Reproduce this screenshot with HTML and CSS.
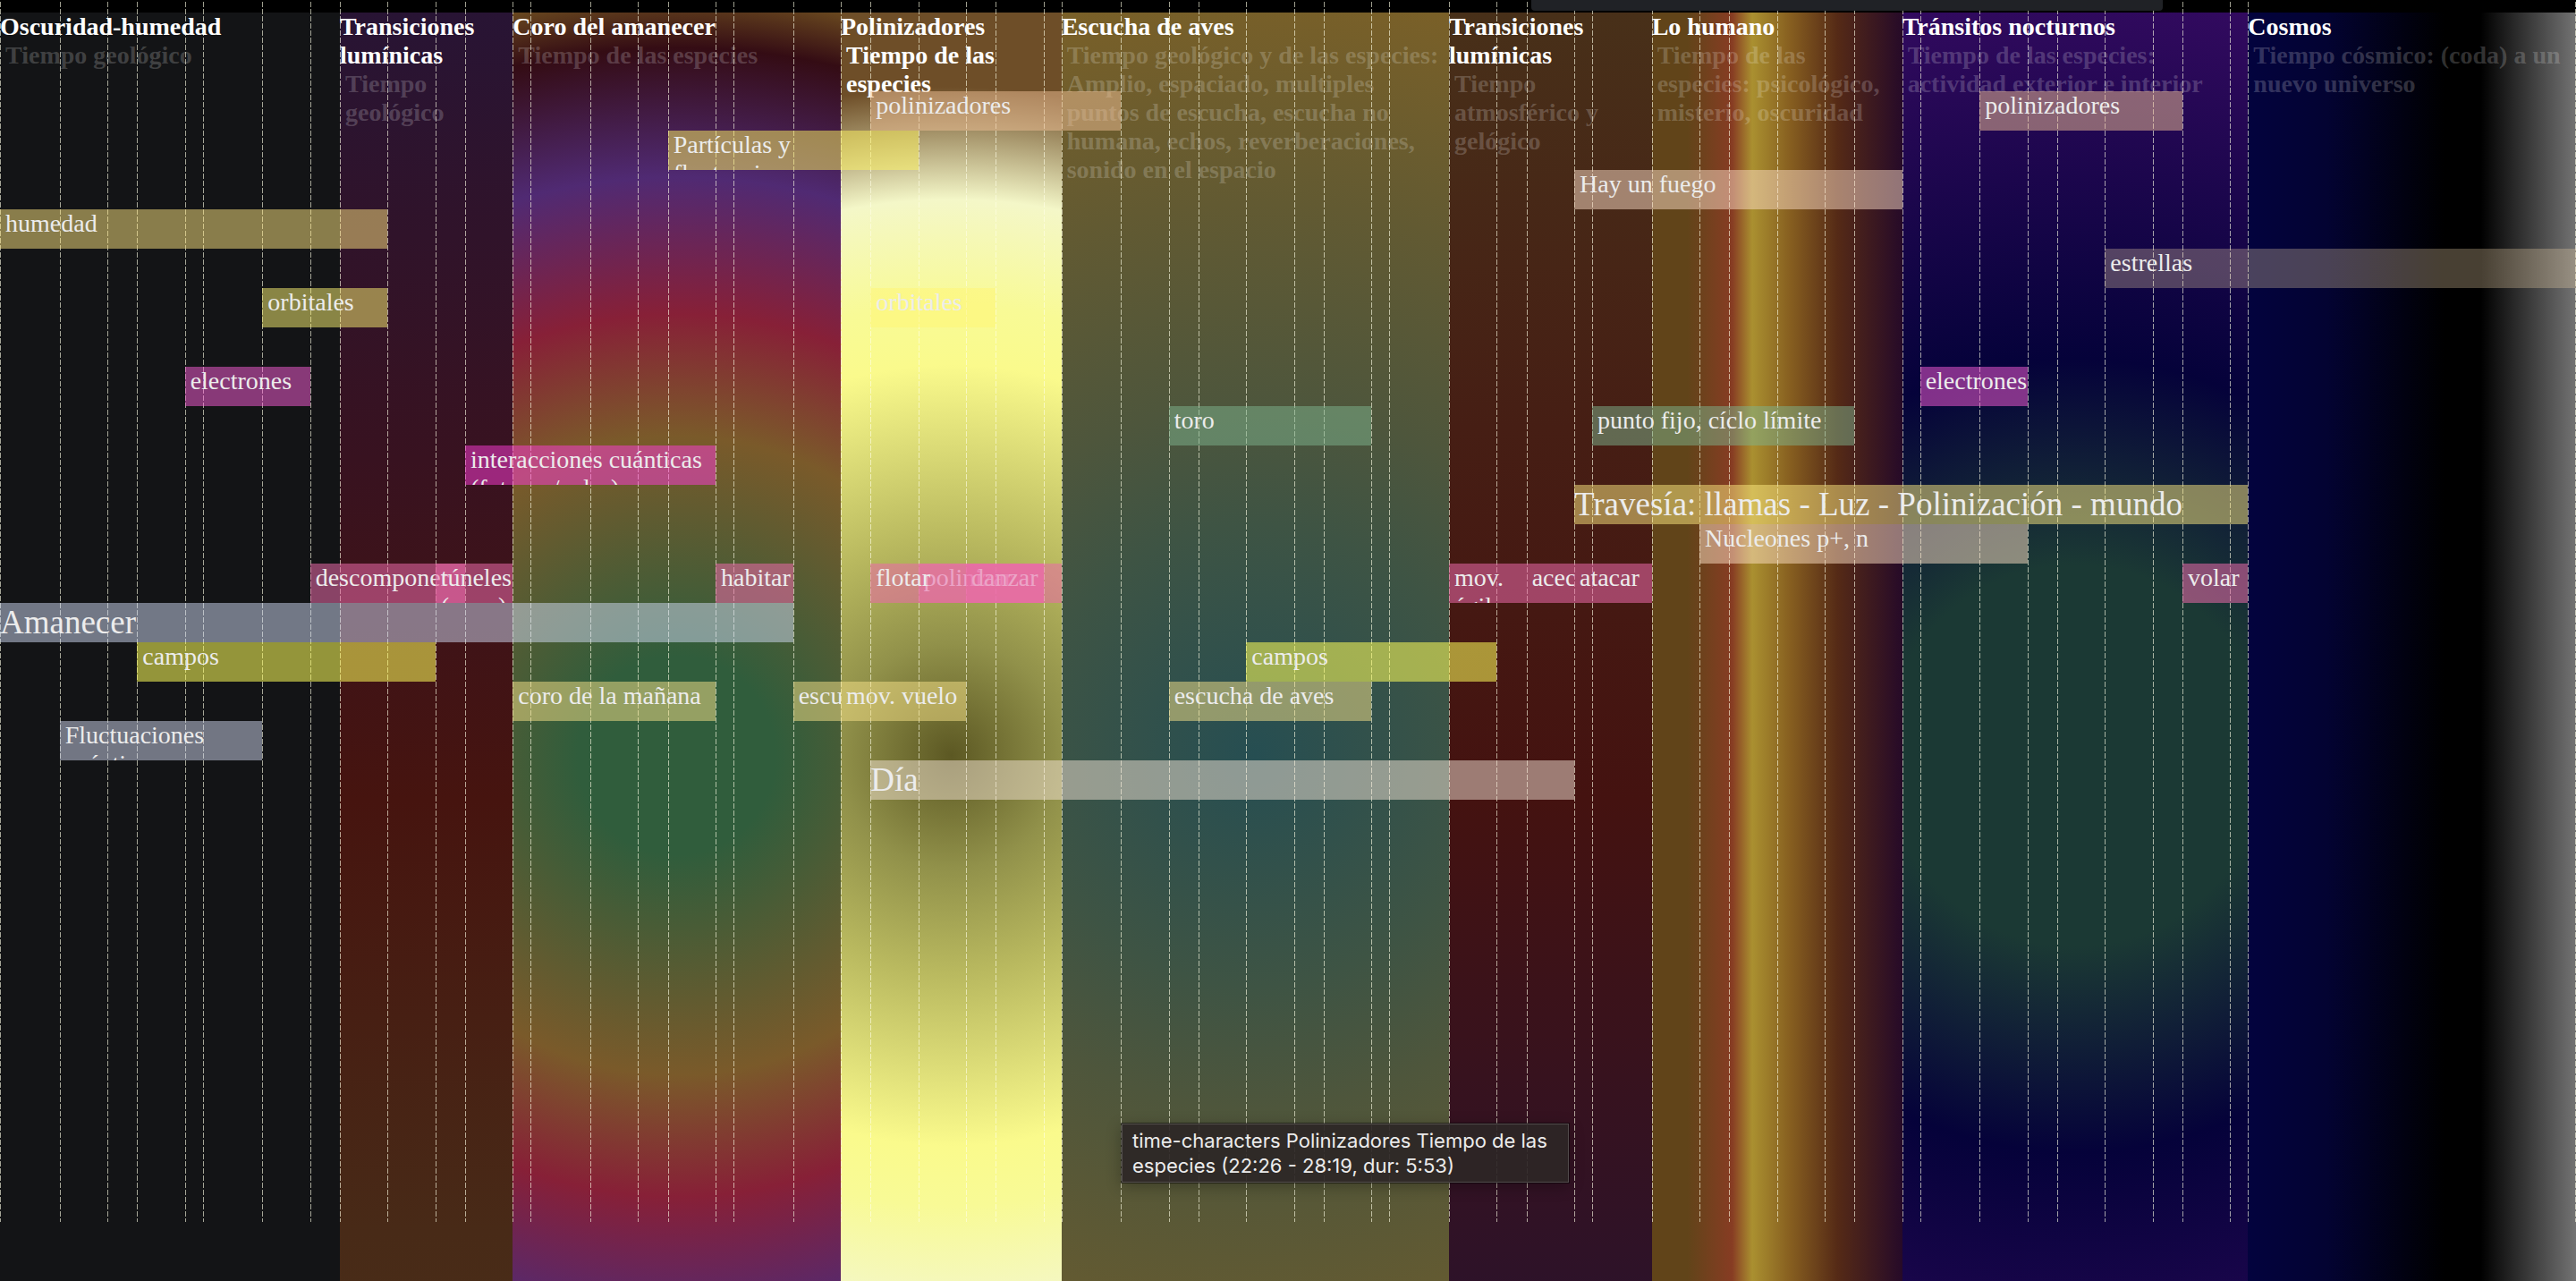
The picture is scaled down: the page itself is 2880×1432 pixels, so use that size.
FILE: index.html
```
<!DOCTYPE html>
<html lang="es">
<head>
<meta charset="utf-8">
<meta name="viewport" content="width=device-width, initial-scale=1">
<title>Línea de tiempo</title>
<link rel="stylesheet" href="styles.css">
</head>
<body>
<main class="timeline">
  <div class="layer scenes">
    <section class="scene scene-dark" style="--from:0;--to:57"><h2>Oscuridad-humedad</h2><p>Tiempo geológico</p></section>
    <section class="scene scene-dawn" style="--from:57;--to:86"><h2>Transiciones lumínicas</h2><p>Tiempo geológico</p></section>
    <section class="scene scene-chorus" style="--from:86;--to:141"><h2>Coro del amanecer</h2><p>Tiempo de las especies</p></section>
    <section class="scene scene-pollen active" style="--from:141;--to:178"><h2>Polinizadores</h2><p>Tiempo de las especies</p></section>
    <section class="scene scene-birds" style="--from:178;--to:243"><h2>Escucha de aves</h2><p>Tiempo geológico y de las especies: Amplio, espaciado, multiples puntos de escucha, escucha no humana, echos, reverberaciones, sonido en el espacio</p></section>
    <section class="scene scene-dusk" style="--from:243;--to:277"><h2>Transiciones lumínicas</h2><p>Tiempo atmosférico y gelógico</p></section>
    <section class="scene scene-human" style="--from:277;--to:319"><h2>Lo humano</h2><p>Tiempo de las especies: psicológico, misterio, oscuridad</p></section>
    <section class="scene scene-night" style="--from:319;--to:377"><h2>Tránsitos nocturnos</h2><p>Tiempo de las especies: actividad exterior e interior</p></section>
    <section class="scene scene-cosmos" style="--from:377;--to:432"><h2>Cosmos</h2><p>Tiempo cósmico: (coda) a un nuevo universo</p></section>
  </div>

  <div class="layer marks" id="marks" aria-hidden="true"></div>

  <div class="layer bars">
    <div class="bar pollinator" style="--row:1;--from:146;--to:188">polinizadores</div>
    <div class="bar pollinator" style="--row:1;--from:332;--to:366">polinizadores</div>
    <div class="bar particle" style="--row:2;--from:112;--to:154">Partículas y fluctuaciones</div>
    <div class="bar fire" style="--row:3;--from:264;--to:319">Hay un fuego</div>
    <div class="bar humidity" style="--row:4;--from:0;--to:65">humedad</div>
    <div class="bar star" style="--row:5;--from:353;--to:432">estrellas</div>
    <div class="bar orbital" style="--row:6;--from:44;--to:65">orbitales</div>
    <div class="bar orbital" style="--row:6;--from:146;--to:167">orbitales</div>
    <div class="bar electron" style="--row:8;--from:31;--to:52">electrones</div>
    <div class="bar electron" style="--row:8;--from:322;--to:340">electrones</div>
    <div class="bar attractor" style="--row:9;--from:196;--to:230">toro</div>
    <div class="bar attractor" style="--row:9;--from:267;--to:311">punto fijo, cíclo límite</div>
    <div class="bar quantum" style="--row:10;--from:78;--to:120">interacciones cuánticas (fotones/color)</div>
    <div class="bar chapter journey" style="--row:11;--from:264;--to:377">Travesía: llamas - Luz - Polinización - mundo</div>
    <div class="bar nucleon" style="--row:12;--from:285;--to:340">Nucleones p+, n</div>
    <div class="bar motion" style="--row:13;--from:52;--to:78">descomponer</div>
    <div class="bar motion" style="--row:13;--from:73;--to:86">túneles (mov.)</div>
    <div class="bar motion" style="--row:13;--from:120;--to:133">habitar</div>
    <div class="bar motion" style="--row:13;--from:154;--to:175">polinizar</div>
    <div class="bar motion" style="--row:13;--from:162;--to:178">danzar</div>
    <div class="bar motion" style="--row:13;--from:146;--to:175">flotar</div>
    <div class="bar motion" style="--row:13;--from:243;--to:256">mov. ágil</div>
    <div class="bar motion" style="--row:13;--from:256;--to:264">acechar</div>
    <div class="bar motion" style="--row:13;--from:264;--to:277">atacar</div>
    <div class="bar motion" style="--row:13;--from:366;--to:377">volar</div>
    <div class="bar chapter dawn" style="--row:14;--from:0;--to:133">Amanecer</div>
    <div class="bar field" style="--row:15;--from:23;--to:73">campos</div>
    <div class="bar field" style="--row:15;--from:209;--to:251">campos</div>
    <div class="bar listening" style="--row:16;--from:86;--to:120">coro de la mañana</div>
    <div class="bar listening" style="--row:16;--from:133;--to:141">escucha</div>
    <div class="bar listening" style="--row:16;--from:141;--to:162">mov. vuelo</div>
    <div class="bar listening" style="--row:16;--from:196;--to:230">escucha de aves</div>
    <div class="bar fluctuation" style="--row:17;--from:10;--to:44">Fluctuaciones cuánticas</div>
    <div class="bar chapter day" style="--row:18;--from:146;--to:264">Día</div>
  </div>

  <div class="dock"></div>
  <div class="tooltip" role="tooltip">time-characters Polinizadores Tiempo de las especies (22:26 - 28:19, dur: 5:53)</div>
</main>
<script src="marks.js"></script>
</body>
</html>
```
FILE: marks.js
```
// One dashed mark per cue; the steps are in grid units (432 for the whole piece).
const cues = [0, 10, 18, 23, 31, 34, 44, 52, 57, 65, 73, 78, 86, 89, 99, 107, 112, 120, 123, 133,
  141, 146, 154, 162, 167, 175, 178, 188, 196, 201, 209, 217, 222, 230, 233, 243, 251, 256, 264,
  267, 277, 285, 290, 298, 306, 311, 319, 322, 332, 340, 345, 353, 361, 366, 374, 377];
const layer = document.getElementById("marks");
for (const cue of cues) {
  const mark = document.createElement("span");
  mark.className = "mark";
  mark.style.setProperty("--from", cue);
  layer.append(mark);
}
const end = document.createElement("span");
end.className = "mark mark-end";
end.style.setProperty("--from", 431);
layer.append(end);
```
FILE: styles.css
```
* { box-sizing: border-box; }

body {
  margin: 0;
  background: #000;
  color: #fff;
  font-family: "Liberation Serif", "Times New Roman", serif;
  font-size: 28px;
  line-height: 32px;
}

.timeline {
  position: relative;
  display: grid;
  grid-template: 100vh / 100%;
  overflow: hidden;
}

.layer {
  grid-area: 1 / 1;
  display: grid;
  grid-template-columns: repeat(432, minmax(0, 1fr));
}

/* scenes */
.scenes {
  margin-top: 14px;
  height: 116vh;
}
.scene {
  grid-row: 1;
  grid-column: calc(var(--from) + 1) / calc(var(--to) + 1);
}
.scene h2 {
  margin: 0;
  font-size: inherit;
  font-weight: bold;
}
.scene p {
  margin: 0;
  padding-left: 6px;
  font-weight: bold;
  color: rgba(255, 255, 255, .2);
}
.scene.active p { color: #fff; }

.scene-dark { background: #131416; }
.scene-dawn { background: linear-gradient(#281434 0%, #381220 30%, #46140f 53%, #482a17 82%, #4a3018 100%); }
.scene-chorus { background: radial-gradient(circle, #305d3c 13%, #7a5a2a 42%, #872037 58%, #502a73 76%, #340c14 93%, #69481f 100%); }
.scene-pollen { background: radial-gradient(circle, #5c5823 0%, #91914a 15%, #b9b95f 29%, #fafa8c 52%, #f8fa96 60%, #f4f7c8 74%, #6e4e28 89%); }
.scene-birds { background: radial-gradient(circle, #264e52 0%, #3e5444 30%, #4e563c 46%, #625a32 72%, #7a6028 100%); }
.scene-dusk { background: linear-gradient(#483019 0%, #461e14 28%, #441210 53%, #2d1229 86%, #281434 100%); }
.scene-human { background: linear-gradient(to right, #614419 14%, #873c23 32%, #aa9030 40%, #875f20 55%, #552a16 74%, #260a28 100%); }
.scene-night { background: radial-gradient(circle, #1b3934 25%, #05023a 52%, #320a5f 100%); }
.scene-cosmos { background: linear-gradient(to right, #03033e 0%, #030332 24%, #000 60%, #000 71%, #737373 100%); }

/* cue marks */
.marks { height: 1366px; }
.mark {
  grid-row: 1;
  grid-column: calc(var(--from) + 1);
  width: 1px;
  background: repeating-linear-gradient(transparent 0 2px, rgba(255, 255, 230, .62) 2px 8px);
}
.mark-end { justify-self: end; }

/* bars */
.bars {
  margin-top: 102px;
  grid-template-rows: repeat(18, 44px);
}
.bar {
  grid-row: var(--row);
  grid-column: calc(var(--from) + 1) / calc(var(--to) + 1);
  overflow: hidden;
  padding-left: 6px;
  color: #ececec;
}
.bar.chapter {
  padding-left: 0;
  font-size: 37px;
  line-height: 44px;
}

.pollinator { background: rgba(240, 192, 150, .5); }
.particle { background: rgba(255, 245, 95, .5); }
.fire { background: rgba(254, 221, 199, .5); }
.humidity { background: rgba(255, 230, 128, .5); }
.star { background: rgba(240, 213, 170, .3); }
.orbital { background: rgba(255, 245, 115, .5); }
.electron { background: rgba(253, 94, 218, .5); }
.attractor { background: rgba(126, 180, 142, .5); }
.quantum { background: rgba(255, 60, 218, .5); }
.journey { background: rgba(255, 235, 130, .5); }
.nucleon { background: rgba(255, 225, 198, .5); }
.motion { background: rgba(235, 105, 170, .55); }
.dawn { background: rgba(210, 220, 245, .5); }
.field { background: rgba(255, 255, 90, .55); }
.listening { background: rgba(250, 228, 138, .5); }
.fluctuation { background: rgba(210, 215, 240, .5); }
.day { background: rgba(245, 230, 215, .5); }

/* overlays */
.dock {
  position: absolute;
  top: 0;
  left: 59.45%;
  width: 24.5%;
  height: 12px;
  border-radius: 0 0 4px 4px;
  background: #202226;
}
.tooltip {
  position: absolute;
  top: 1256px;
  left: 1254px;
  width: 500px;
  padding: 4px 11px;
  border: 1px solid rgba(255, 255, 255, .18);
  outline: 1px solid rgba(0, 0, 0, .5);
  background: rgba(44, 38, 38, .92);
  box-shadow: 0 4px 16px rgba(0, 0, 0, .3);
  color: #ececec;
  font-family: Inter, sans-serif;
  font-size: 22px;
  line-height: 28px;
}
```
